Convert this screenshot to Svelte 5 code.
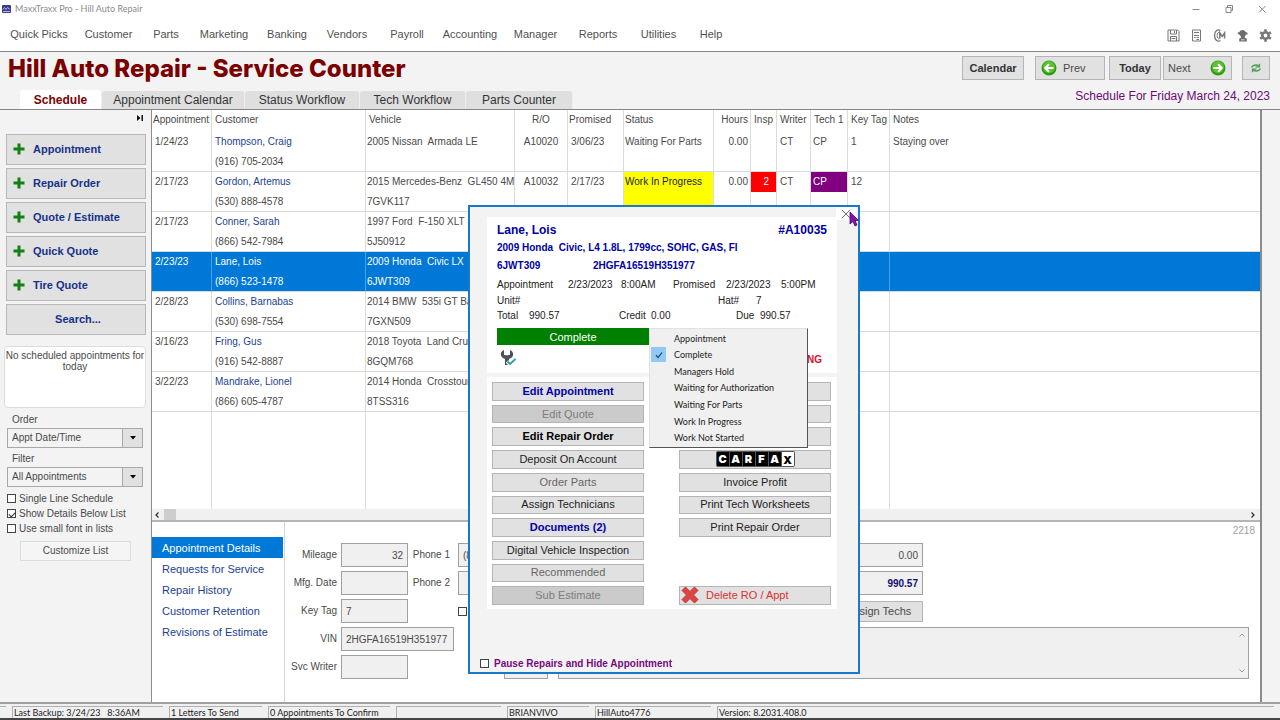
<svelte:head>
  <title>MaxxTraxx Pro - Hill Auto Repair</title>
</svelte:head>

<script lang="ts">
  type Row = {
    appt: string;
    customer: string;
    phone: string;
    vehicle: string;
    plate: string;
    ro?: string;
    promised?: string;
    status?: string;
    hours?: string;
    insp?: string;
    writer?: string;
    tech?: string;
    keyTag?: string;
    notes?: string;
    busy?: boolean;
    selected?: boolean;
  };

  type Action = {
    label: string;
    tone?: 'primary' | 'strong' | 'muted' | 'disabled' | 'danger';
    kind?: 'carfax' | 'gap';
  };

  const menus = [
    'Quick Picks', 'Customer', 'Parts', 'Marketing', 'Banking', 'Vendors',
    'Payroll', 'Accounting', 'Manager', 'Reports', 'Utilities', 'Help'
  ];

  const tabs = ['Schedule', 'Appointment Calendar', 'Status Workflow', 'Tech Workflow', 'Parts Counter'];

  const newButtons = ['Appointment', 'Repair Order', 'Quote / Estimate', 'Quick Quote', 'Tire Quote'];

  const rows: Row[] = [
    { appt: '1/24/23', customer: 'Thompson, Craig', phone: '(916) 705-2034', vehicle: '2005 Nissan  Armada LE', plate: '', ro: 'A10020', promised: '3/06/23', status: 'Waiting For Parts', hours: '0.00', writer: 'CT', tech: 'CP', keyTag: '1', notes: 'Staying over' },
    { appt: '2/17/23', customer: 'Gordon, Artemus', phone: '(530) 888-4578', vehicle: '2015 Mercedes-Benz  GL450 4Ma', plate: '7GVK117', ro: 'A10032', promised: '2/17/23', status: 'Work In Progress', hours: '0.00', insp: '2', writer: 'CT', tech: 'CP', keyTag: '12', busy: true },
    { appt: '2/17/23', customer: 'Conner, Sarah', phone: '(866) 542-7984', vehicle: '1997 Ford  F-150 XLT', plate: '5J50912' },
    { appt: '2/23/23', customer: 'Lane, Lois', phone: '(866) 523-1478', vehicle: '2009 Honda  Civic LX', plate: '6JWT309', selected: true },
    { appt: '2/28/23', customer: 'Collins, Barnabas', phone: '(530) 698-7554', vehicle: '2014 BMW  535i GT Ba', plate: '7GXN509' },
    { appt: '3/16/23', customer: 'Fring, Gus', phone: '(916) 542-8887', vehicle: '2018 Toyota  Land Cru', plate: '8GQM768' },
    { appt: '3/22/23', customer: 'Mandrake, Lionel', phone: '(866) 605-4787', vehicle: '2014 Honda  Crosstour', plate: '8TSS316' }
  ];

  const detailTabs = [
    'Appointment Details', 'Requests for Service', 'Repair History',
    'Customer Retention', 'Revisions of Estimate'
  ];

  const leftActions: Action[] = [
    { label: 'Edit Appointment', tone: 'primary' },
    { label: 'Edit Quote', tone: 'disabled' },
    { label: 'Edit Repair Order', tone: 'strong' },
    { label: 'Deposit On Account' },
    { label: 'Order Parts', tone: 'muted' },
    { label: 'Assign Technicians' },
    { label: 'Documents (2)', tone: 'primary' },
    { label: 'Digital Vehicle Inspection' },
    { label: 'Recommended', tone: 'muted' },
    { label: 'Sub Estimate', tone: 'disabled' }
  ];

  const rightActions: Action[] = [
    { label: '' },
    { label: '' },
    { label: '' },
    { label: 'CARFAX', kind: 'carfax' },
    { label: 'Invoice Profit' },
    { label: 'Print Tech Worksheets' },
    { label: 'Print Repair Order' },
    { label: '', kind: 'gap' },
    { label: '', kind: 'gap' },
    { label: 'Delete RO / Appt', tone: 'danger' }
  ];

  const statuses = [
    'Appointment', 'Complete', 'Managers Hold', 'Waiting for Authorization',
    'Waiting For Parts', 'Work In Progress', 'Work Not Started'
  ];

  let current = $state('Complete');
  let activeTab = $state('Schedule');
  let activeDetail = $state('Appointment Details');
</script>

<div class="app">
  <header class="titlebar">
    <svg class="app-icon" viewBox="0 0 9 8" aria-hidden="true">
      <rect width="9" height="8" rx="1" fill="#3d3a8c" />
      <path d="M1 4.5 2.5 2.5 4 4.5 5.5 2.5 8 4.500M1 6.500h7" stroke="#b9b6ee" stroke-width="1" fill="none" />
    </svg>
    <span>MaxxTraxx Pro - Hill Auto Repair</span>
    <div class="window-controls">
      <svg viewBox="0 0 10 10"><path d="M1.500 5.500h7" /></svg>
      <svg viewBox="0 0 10 10"><path d="M2 3.500h5v5H2zM3.500 3.500V1.500h5v5H7" /></svg>
      <svg viewBox="0 0 10 10"><path d="M2 2l6.500 6.500M8.500 2 2 8.500" /></svg>
    </div>
  </header>

  <div class="menubar">
    <nav class="menus">
      {#each menus as menu}
        <a href="#menu">{menu}</a>
      {/each}
    </nav>
    <div class="tools">
      <svg viewBox="0 0 13 13" fill="none" stroke="#777"><path d="M1 1h9.500L12 2.500V12H1zM3.500 1v4h6V1M3.500 12V7.500h6V12M7.500 2v2M4.500 9.500h4" /></svg>
      <svg viewBox="0 0 13 13" fill="none" stroke="#777"><path d="M2.500 1h8v11h-8zM4 3.500h5M4 6.500h5M4 8.500h1.500M6.500 8.500H9M6.500 10.500H9" /></svg>
      <svg viewBox="0 0 13 13" fill="none" stroke="#777"><path d="M7.500 1.500C4.500-.200 1.500 2 1.500 6.500s3 6.700 6 5" stroke-width="1.400" /><path d="M7 3.200C5.200 2.800 4.200 4.500 4.200 6.500s1 3.700 2.300 3.300" /><path d="M6.800 9.500V4l2.400 3.500L11.600 4v5.500" stroke-width="1.500" /></svg>
      <svg viewBox="0 0 13 13" fill="#6e6e6e"><path d="M3.500 3C4.200.300 9 .300 9.600 3l1.900.8v1.700H10L8.800 7.800v1l2 .9v2.900H3.200V9.700l1.800-1v-1L3.300 5.500 1.800 5V3.500z" /><path d="M5 10.800h3.500" stroke="#ddd" /></svg>
      <svg viewBox="0 0 13 13" fill="none" stroke="#777"><circle cx="6.500" cy="6.500" r="3.200" stroke-width="2.600" /><path d="M6.500.300v2M6.500 10.700v2M1.100 3.400l1.800 1M10.100 8.600l1.800 1M1.100 9.600l1.800-1M10.100 4.400l1.800-1" stroke-width="2.600" /></svg>
    </div>
  </div>

  <section class="heading">
    <div class="heading-top">
      <h1>Hill Auto Repair - Service Counter</h1>
      <div class="date-buttons">
        <button class="btn strong calendar">Calendar</button>
        <button class="btn prev">
          <svg viewBox="0 0 16 16"><circle cx="8" cy="8" r="7.500" fill="#2f9c14" /><circle cx="8" cy="7" r="6" fill="#5cc233" /><path d="M12.500 8H4.500M8 4.300 4.300 8 8 11.700" fill="none" stroke="#fff" stroke-width="2" /></svg>
          Prev
        </button>
        <button class="btn strong today">Today</button>
        <button class="btn next">
          Next
          <svg viewBox="0 0 16 16"><circle cx="8" cy="8" r="7.500" fill="#2f9c14" /><circle cx="8" cy="7" r="6" fill="#5cc233" /><path d="M3.500 8h8M8 4.300 11.700 8 8 11.700" fill="none" stroke="#fff" stroke-width="2" /></svg>
        </button>
        <button class="btn refresh" aria-label="Refresh">
          <svg viewBox="0 0 12 10" fill="none" stroke="#4f9e5a" stroke-width="1.600"><path d="M1.500 4.500C3 1.500 7 1.500 9 3M10.500 5.500C9 8.500 5 8.500 3 7" /><path d="M9.500.800v3h-4M2.500 9.200v-3h4" stroke-width="1.200" /></svg>
        </button>
      </div>
    </div>
    <div class="heading-bottom">
      <div class="tabs" role="tablist">
        {#each tabs as tab}
          <button class="tab" role="tab" class:active={tab === activeTab} aria-selected={tab === activeTab} onclick={() => (activeTab = tab)}>{tab}</button>
        {/each}
      </div>
      <p class="schedule-date">Schedule For Friday March 24, 2023</p>
    </div>
  </section>

  <main class="body">
    <aside class="sidebar">
      <svg class="collapse" viewBox="0 0 6 6"><path d="M0 0l3.500 3L0 6zM4.500 0H6v6H4.500z" fill="#111" /></svg>
      <div class="new-buttons">
        {#each newButtons as label}
          <button class="side-btn">
            <svg viewBox="0 0 12 12"><path d="M6 .500v11M.500 6h11" stroke="#138013" stroke-width="3" /></svg>
            {label}
          </button>
        {/each}
        <button class="side-btn search">Search...</button>
      </div>
      <p class="notice">No scheduled appointments for today</p>
      <div class="filters">
        <label for="order">Order</label>
        <div class="select">
          <select id="order"><option>Appt Date/Time</option></select>
          <span class="arrow"><svg viewBox="0 0 6 4"><path d="M0 0h6L3 3.500z" /></svg></span>
        </div>
        <label for="filter">Filter</label>
        <div class="select">
          <select id="filter"><option>All Appointments</option></select>
          <span class="arrow"><svg viewBox="0 0 6 4"><path d="M0 0h6L3 3.500z" /></svg></span>
        </div>
      </div>
      <div class="checks">
        <label><input type="checkbox" />Single Line Schedule</label>
        <label><input type="checkbox" checked />Show Details Below List</label>
        <label><input type="checkbox" />Use small font in lists</label>
      </div>
      <button class="customize">Customize List</button>
    </aside>

    <div class="content">
      <div class="list">
        <table>
          <colgroup>
            <col class="c-appt" /><col class="c-customer" /><col class="c-vehicle" /><col class="c-ro" />
            <col class="c-promised" /><col class="c-status" /><col class="c-hours" /><col class="c-insp" />
            <col class="c-writer" /><col class="c-tech" /><col class="c-key" /><col />
          </colgroup>
          <thead>
            <tr>
              <th class="tight">Appointment</th>
              <th>Customer</th>
              <th>Vehicle</th>
              <th class="center">R/O</th>
              <th class="tight">Promised</th>
              <th class="tight">Status</th>
              <th class="right">Hours</th>
              <th class="center">Insp</th>
              <th>Writer</th>
              <th>Tech 1</th>
              <th>Key Tag</th>
              <th>Notes</th>
            </tr>
          </thead>
          <tbody>
            {#each rows as row}
              <tr class="entry" class:selected={row.selected}>
                <td>{row.appt}</td>
                <td><a href="#customer">{row.customer}</a><div>{row.phone}</div></td>
                <td class="tight"><div>{row.vehicle}</div><div>{row.plate}</div></td>
                <td class="center">{row.ro ?? ''}</td>
                <td>{row.promised ?? ''}</td>
                <td class="tight" class:busy={row.busy}>{row.status ?? ''}</td>
                <td class="right">{row.hours ?? ''}</td>
                <td class="flush">{#if row.insp}<div class="insp">{row.insp}</div>{/if}</td>
                <td>{row.writer ?? ''}</td>
                <td class="flush"><div class="tech" class:assigned={row.busy}>{row.tech ?? ''}</div></td>
                <td>{row.keyTag ?? ''}</td>
                <td>{row.notes ?? ''}</td>
              </tr>
            {/each}
            <tr class="filler">
              {#each Array(12) as _}<td></td>{/each}
            </tr>
          </tbody>
        </table>
      </div>
      <div class="hscroll">
        <svg viewBox="0 0 6 8"><path d="M4.500 1.500 2 4l2.500 2.500" /></svg>
        <span class="thumb"></span>
        <svg class="end" viewBox="0 0 6 8"><path d="M1.500 1.500 4 4 1.500 6.500" /></svg>
      </div>

      <section class="details">
        <nav class="detail-nav">
          {#each detailTabs as tab}
            <button class:active={tab === activeDetail} onclick={() => (activeDetail = tab)}>{tab}</button>
          {/each}
        </nav>
        <div class="detail-main">
          <p class="record">2218</p>
          <div class="form">
            <label for="mileage">Mileage</label>
            <input id="mileage" class="num" value="32" readonly />
            <label for="phone1" class="phone">Phone 1</label>
            <input id="phone1" value="(866) 523-1478" readonly />
            <input class="num balance" value="0.00" aria-label="Credit" readonly />

            <label for="mfg" class="start">Mfg. Date</label>
            <input id="mfg" readonly />
            <label for="phone2" class="phone">Phone 2</label>
            <input id="phone2" readonly />
            <input class="num balance due" value="990.57" aria-label="Due" readonly />

            <label for="keytag" class="start">Key Tag</label>
            <input id="keytag" value="7" readonly />
            <input type="checkbox" class="flag" aria-label="Key Tag" />
            <button class="btn assign">Assign Techs</button>

            <label for="vin" class="start">VIN</label>
            <input id="vin" class="wide" value="2HGFA16519H351977" readonly />
            <div class="memo">
              <textarea aria-label="Notes" readonly></textarea>
              <div class="memo-scroll">
                <svg viewBox="0 0 6 4"><path d="M.500 3.500 3 1l2.500 2.500" /></svg>
                <svg viewBox="0 0 6 4"><path d="M.500.500 3 3 5.500.500" /></svg>
              </div>
            </div>

            <label for="writer" class="start">Svc Writer</label>
            <input id="writer" readonly />
            <input class="code" aria-label="Svc Writer" readonly />
          </div>
        </div>
      </section>
    </div>
  </main>

  <footer class="statusbar">
    <span></span>
    <span>Last Backup: 3/24/23 &nbsp; 8:36AM</span>
    <span>1 Letters To Send</span>
    <span>0 Appointments To Confirm</span>
    <span></span>
    <span>BRIANVIVO</span>
    <span>HillAuto4776</span>
    <span>Version: 8.2031.408.0</span>
  </footer>

  <div class="dialog" role="dialog" aria-label="Lane, Lois">
    <button class="close" aria-label="Close"><svg viewBox="0 0 12 12"><path d="M1 1l10 10M11 1 1 11" stroke="#555" fill="none" /></svg></button>
    <svg class="cursor" viewBox="0 0 10 16"><path d="M1 1v12l3-2.500 2 4.500 2-1-2-4.500h3.500z" fill="#8a0fb0" stroke="#4b0a66" stroke-width=".8" /></svg>

    <section class="card summary">
      <div class="who"><strong>Lane, Lois</strong><strong>#A10035</strong></div>
      <div class="car">2009 Honda&nbsp; Civic, L4 1.8L, 1799cc, SOHC, GAS, FI</div>
      <div class="ids"><span>6JWT309</span><span>2HGFA16519H351977</span></div>
      <div class="times">
        <span>Appointment</span><span>2/23/2023</span><span>8:00AM</span><span>Promised</span><span>2/23/2023</span><span>5:00PM</span>
      </div>
      <div class="units"><span>Unit#</span><span>Hat#</span><span>7</span></div>
      <div class="totals">
        <span>Total</span><span>990.57</span><span>Credit</span><span>0.00</span><span>Due</span><span>990.57</span>
      </div>
      <div class="state">
        <button class="state-btn">{current}</button>
        <ul class="state-menu" role="menu">
          {#each statuses as status}
            <li role="none">
              <button role="menuitemradio" aria-checked={status === current} onclick={() => (current = status)}>
                <span class="tick" class:on={status === current}>
                  {#if status === current}
                    <svg viewBox="0 0 8 8"><path d="M1 4l2 2.500L7 1.500" fill="none" stroke="#1d3b5c" stroke-width="1.200" /></svg>
                  {/if}
                </span>
                {status}
              </button>
            </li>
          {/each}
        </ul>
      </div>
      <div class="flags">
        <svg viewBox="0 0 17 17">
          <path d="M4 1C1 2 0 5 1.500 7.500 2.500 9 4 9.500 5 10v6h4v-6c1-.5 3-1 3.800-3C13.800 4.500 12.500 2 10 1v5H8.500L7 6.500 5.500 6H4z" fill="#4c5157" />
          <path d="M7 12.500l3 3L16 9.500" fill="none" stroke="#fff" stroke-width="3.500" />
          <path d="M7.500 12.500l2.500 2.500L15.500 10" fill="none" stroke="#21a0a4" stroke-width="1.800" />
        </svg>
        <strong>NG</strong>
      </div>
    </section>

    <section class="card actions">
      {#each [leftActions, rightActions] as column}
        <div class="column">
          {#each column as action}
            {#if action.kind === 'gap'}
              <span></span>
            {:else if action.kind === 'carfax'}
              <button class="action">
                <span class="carfax">{#each action.label.split('') as letter, i}<b class:last={i === 5}>{letter}</b>{/each}</span>
              </button>
            {:else}
              <button class="action {action.tone ?? ''}" disabled={action.tone === 'disabled'}>
                {#if action.tone === 'danger'}
                  <svg viewBox="0 0 18 18"><path d="M4.500 1 9 5.500 13.500 1 17 4.500 12.500 9l4.500 4.500-3.500 3.500L9 12.500 4.500 17 1 13.500 5.500 9 1 4.500z" fill="#dc4444" stroke="#b43a3a" /></svg>
                {/if}
                {action.label}
              </button>
            {/if}
          {/each}
        </div>
      {/each}
    </section>

    <label class="pause"><input type="checkbox" />Pause Repairs and Hide Appointment</label>
  </div>
</div>

<style>
  :global(body) {
    margin: 0;
  }

  .app,
  .app :global(*) {
    box-sizing: border-box;
  }

  .app {
    position: relative;
    display: flex;
    flex-direction: column;
    height: 100vh;
    min-height: 720px;
    overflow: hidden;
    background: #f3f3f3;
    color: #4a4a4a;
    font-family: "Liberation Sans", Arial, sans-serif;
    font-size: 10px;
  }

  button,
  input,
  select,
  textarea {
    margin: 0;
    padding: 0;
    border-radius: 0;
    color: inherit;
    font: inherit;
  }

  p,
  h1,
  ul {
    margin: 0;
    padding: 0;
  }

  a {
    color: inherit;
    text-decoration: none;
  }

  svg {
    display: block;
    flex-shrink: 0;
  }

  input[type='checkbox'] {
    appearance: none;
    display: grid;
    place-items: center;
    width: 9px;
    height: 9px;
    border: 1px solid #444;
    background: #fff;
  }

  input[type='checkbox']:checked::after {
    content: '';
    width: 5px;
    height: 3px;
    border: solid #333;
    border-width: 0 0 1px 1px;
    transform: rotate(-45deg);
  }

  .titlebar {
    display: flex;
    align-items: center;
    gap: 4px;
    height: 17px;
    padding: 0 13px 0 2px;
    background: #fff;
    color: #8c8c8c;
    font-family: Lato, sans-serif;
    font-size: 9px;
  }

  .app-icon {
    width: 9px;
    height: 8px;
  }

  .window-controls {
    display: flex;
    gap: 23px;
    margin-left: auto;
  }

  .window-controls svg {
    width: 10px;
    height: 10px;
    fill: none;
    stroke: #888;
  }

  .menubar {
    display: flex;
    align-items: center;
    justify-content: space-between;
    height: 35px;
    padding-right: 8px;
    border-bottom: 1px solid #858585;
    background: #fff;
  }

  .menus {
    display: grid;
    grid-template-columns: 78px 61px 54px 62px 64px 56px 64px 62px 69px 56px 65px 40px;
    color: #505050;
    font-size: 11px;
    text-align: center;
  }

  .tools {
    display: flex;
    gap: 10px;
    padding-top: 3px;
  }

  .tools svg {
    width: 13px;
    height: 13px;
  }

  .btn {
    display: flex;
    align-items: center;
    justify-content: center;
    border: 1px solid #b5b5b5;
    background: #e1e1e1;
    color: #4a4a4a;
    font-size: 11px;
  }

  .strong {
    color: #333;
    font-weight: 700;
  }

  .heading-top {
    display: flex;
    justify-content: space-between;
    height: 34px;
    padding: 4px 10px 0 8px;
  }

  h1 {
    color: #7b0000;
    font-family: Inter, sans-serif;
    font-size: 24px;
    font-weight: 800;
    line-height: 25px;
    white-space: nowrap;
  }

  .date-buttons {
    display: flex;
    height: 24px;
  }

  .calendar {
    width: 62px;
    margin-right: 11px;
  }

  .prev {
    justify-content: flex-start;
    gap: 6px;
    width: 70px;
    margin-right: 4px;
    padding-left: 5px;
  }

  .today {
    width: 52px;
    margin-right: 2px;
  }

  .next {
    justify-content: space-between;
    width: 69px;
    margin-right: 10px;
    padding: 0 5px 0 4px;
  }

  .prev svg,
  .next svg {
    width: 16px;
    height: 16px;
  }

  .refresh {
    width: 28px;
  }

  .refresh svg {
    width: 12px;
    height: 10px;
  }

  .heading-bottom {
    display: flex;
    align-items: flex-end;
    justify-content: space-between;
    height: 24px;
    padding: 0 10px 0 20px;
    border-bottom: 1px solid #858585;
  }

  .tabs {
    display: grid;
    grid-template-columns: 82px 143px 115px 106px 107px;
    align-items: end;
  }

  .tab {
    height: 18px;
    border: 0;
    border-right: 1px solid #eee;
    border-radius: 3px 3px 0 0;
    background: #dfdfdf;
    color: #333;
    font-size: 12px;
    line-height: 18px;
  }

  .tab.active {
    height: 19px;
    background: #fff;
    color: #7b0000;
    font-weight: 700;
  }

  .schedule-date {
    align-self: flex-start;
    color: #6b0d78;
    font-size: 12px;
    line-height: 21px;
  }

  .body {
    display: flex;
    flex: 1;
    min-height: 0;
    padding-right: 18px;
  }

  .sidebar {
    width: 151px;
    padding: 5px 5px 0 6px;
  }

  .collapse {
    width: 6px;
    height: 6px;
    margin: 0 3px 13px auto;
  }

  .new-buttons {
    display: grid;
    gap: 3px;
  }

  .side-btn {
    display: flex;
    align-items: center;
    gap: 8px;
    height: 31px;
    padding: 0 6px 2px;
    border: 1px solid #b8b8b8;
    background: #e1e1e1;
    color: #16318a;
    font-size: 11px;
    font-weight: 700;
  }

  .side-btn svg {
    width: 12px;
    height: 12px;
  }

  .search {
    justify-content: center;
    padding-left: 10px;
  }

  .notice {
    height: 62px;
    margin: 11px 0 0 -2px;
    padding-top: 3px;
    border: 1px solid #ddd;
    border-radius: 4px;
    background: #fff;
    line-height: 11px;
    text-align: center;
  }

  .filters {
    display: grid;
    padding: 4px 3px 0 1px;
  }

  .filters label {
    height: 16px;
    padding-left: 5px;
    line-height: 16px;
  }

  .filters .select + label {
    margin-top: 3px;
  }

  .select {
    position: relative;
    height: 20px;
  }

  select {
    appearance: none;
    width: 100%;
    height: 100%;
    padding: 0 0 2px 4px;
    border: 1px solid #a8a8a8;
    background: #f3f3f3;
  }

  .arrow {
    position: absolute;
    inset: 0 0 0 auto;
    display: grid;
    place-items: center;
    width: 21px;
    border: 1px solid #a8a8a8;
    background: #e1e1e1;
    pointer-events: none;
  }

  .arrow svg {
    width: 6px;
    height: 4px;
  }

  .checks {
    display: grid;
    padding: 4px 0 0 1px;
  }

  .checks label {
    display: flex;
    align-items: center;
    gap: 3px;
    height: 15px;
    white-space: nowrap;
  }

  .customize {
    width: 111px;
    height: 20px;
    margin: 5px 0 0 14px;
    padding-bottom: 2px;
    border: 1px solid #dcdcdc;
    background: #f5f5f5;
  }

  .content {
    display: flex;
    flex: 1;
    flex-direction: column;
    min-width: 0;
    border: solid #8c8c8c;
    border-width: 0 2px 0 1px;
    background: #fff;
  }

  .list {
    flex: 1;
    min-height: 0;
  }

  table {
    width: 100%;
    height: 100%;
    border-collapse: separate;
    border-spacing: 0;
    table-layout: fixed;
  }

  .c-appt { width: 60px; }
  .c-customer { width: 154px; }
  .c-vehicle { width: 149px; }
  .c-ro { width: 53px; }
  .c-promised { width: 56px; }
  .c-status { width: 90px; }
  .c-hours { width: 37px; }
  .c-insp { width: 26px; }
  .c-writer { width: 34px; }
  .c-tech { width: 37px; }
  .c-key { width: 42px; }

  th,
  td {
    overflow: hidden;
    padding: 0 0 0 3px;
    border-right: 1px solid #dcdcdc;
    line-height: 20px;
    text-align: left;
    vertical-align: top;
    white-space: pre;
  }

  th {
    height: 22px;
    font-weight: 400;
  }

  th:last-child,
  td:last-child {
    border-right: 0;
  }

  .entry td {
    height: 40px;
    border-bottom: 1px solid #d5dada;
  }

  td a {
    display: block;
    color: #1c3f94;
  }

  td a + div,
  td div + div {
    height: 19px;
  }

  .tight {
    padding-left: 1px;
  }

  .center {
    padding: 0;
    text-align: center;
  }

  .right {
    padding-right: 2px;
    text-align: right;
  }

  td.flush {
    padding: 0;
  }

  td.busy {
    background: #ff0;
    color: #222;
  }

  .insp {
    padding-right: 7px;
    background: #f00;
    color: #fff;
    text-align: right;
  }

  .tech {
    padding-left: 2px;
  }

  .tech.assigned {
    background: #800080;
    color: #fff;
  }

  .selected td {
    border-right-color: #4c9fe0;
    background: #0078d7;
    color: #fff;
  }

  .selected a {
    color: #fff;
  }

  .hscroll {
    display: flex;
    align-items: center;
    height: 13px;
    padding: 0 4px 0 2px;
    border-bottom: 2px solid #b4b4b4;
    background: #f0f0f0;
  }

  .hscroll svg {
    width: 6px;
    height: 8px;
    fill: none;
    stroke: #333;
    stroke-width: 1.300;
  }

  .hscroll .end {
    margin-left: auto;
  }

  .thumb {
    width: 12px;
    height: 11px;
    margin-left: 4px;
    background: #cdcdcd;
  }

  .details {
    display: flex;
    height: 180px;
  }

  .detail-nav {
    display: flex;
    flex-direction: column;
    width: 133px;
    padding: 15px 1px 0 0;
    border-right: 1px solid #d5d5d5;
  }

  .detail-nav button {
    height: 21px;
    padding-left: 10px;
    border: 0;
    background: none;
    color: #1c3f94;
    font-size: 11px;
    text-align: left;
  }

  .detail-nav .active {
    background: #0078d7;
    color: #fff;
  }

  .detail-main {
    flex: 1;
    padding: 3px 11px 0 0;
  }

  .record {
    height: 18px;
    margin-right: -6px;
    color: #a0a0a0;
    line-height: 12px;
    text-align: right;
  }

  .form {
    display: grid;
    grid-template-columns: 52px 67px 42px 96px 365px 1fr;
    grid-auto-rows: 24px;
    gap: 4px;
  }

  .form label {
    line-height: 23px;
    text-align: right;
    white-space: nowrap;
  }

  .form .phone {
    padding-right: 4px;
  }

  .start {
    grid-column: 1;
  }

  .form input:not([type='checkbox']),
  textarea {
    min-width: 0;
    width: 100%;
    padding: 0 4px;
    border: 1px solid #a0a0a0;
    background: #f0f0f0;
  }

  .form .num {
    text-align: right;
  }

  .form input.balance {
    justify-self: end;
    width: 100px;
  }

  .form .due {
    color: #10106e;
    font-weight: 700;
  }

  .flag {
    grid-column: 4;
    align-self: center;
  }

  .assign {
    grid-column: 5;
    place-self: center end;
    width: 88px;
    height: 21px;
  }

  .form input.wide {
    grid-column: 2 / 4;
  }

  .memo {
    position: relative;
    grid-row: 4 / 6;
    grid-column: 5 / 7;
  }

  textarea {
    display: block;
    height: 100%;
    resize: none;
  }

  .memo-scroll {
    position: absolute;
    inset: 6px 4px 6px auto;
    display: flex;
    flex-direction: column;
    justify-content: space-between;
  }

  .memo-scroll svg {
    width: 6px;
    height: 4px;
    fill: none;
    stroke: #999;
  }

  .form input.code {
    grid-column: 4;
    justify-self: end;
    width: 44px;
    margin-right: 6px;
  }

  .statusbar {
    display: grid;
    grid-template-columns: 6px 151px 93px 122px 105px 82px 116px 1fr;
    gap: 6px;
    height: 18px;
    padding: 2px 6px 0 0;
    border-top: 2px solid #a0a0a0;
    border-bottom: 2px solid #444;
    background: #f0f0f0;
    color: #222;
    font-family: Lato, sans-serif;
    font-size: 9px;
    line-height: 12px;
  }

  .statusbar span {
    overflow: hidden;
    padding-left: 1px;
    border: solid #b0b0b0;
    border-width: 1px 0 0 1px;
    white-space: nowrap;
  }

  .statusbar span:first-child {
    border-left: 0;
  }

  .dialog {
    position: absolute;
    top: 205px;
    left: 468px;
    width: 392px;
    padding: 10px 21px 1px 17px;
    border: 2px solid #1a78c8;
    background: #f3f3f3;
  }

  .close {
    position: absolute;
    top: 0;
    right: 2px;
    display: grid;
    place-items: center;
    width: 20px;
    height: 13px;
    border: 0;
    background: #fff;
  }

  .close svg {
    width: 10px;
    height: 10px;
  }

  .cursor {
    position: absolute;
    top: 4px;
    right: -1px;
    width: 10px;
    height: 16px;
  }

  .card {
    background: #fff;
  }

  .summary {
    height: 156px;
    padding: 4px 10px 0;
    color: #222;
  }

  .who,
  .car,
  .ids {
    color: #0000a8;
    font-weight: 700;
    line-height: 18px;
    white-space: nowrap;
  }

  .who {
    display: flex;
    justify-content: space-between;
    font-size: 12px;
  }

  .ids {
    display: grid;
    grid-template-columns: 96px 1fr;
    margin-bottom: 2px;
  }

  .times,
  .units,
  .totals {
    display: grid;
    line-height: 16px;
  }

  .times {
    grid-template-columns: 71px 53px 52px 53px 55px 1fr;
  }

  .units {
    grid-template-columns: 221px 38px 1fr;
  }

  .totals {
    grid-template-columns: 32px 90px 32px 85px 24px 1fr;
    line-height: 14px;
  }

  .state {
    position: relative;
    z-index: 1;
    margin-top: 5px;
  }

  .state-btn {
    display: block;
    width: 152px;
    height: 17px;
    border: 0;
    background: #008000;
    color: #fff;
    font-size: 11px;
  }

  .state-menu {
    position: absolute;
    top: 0;
    left: 152px;
    display: grid;
    grid-template-rows: repeat(7, 1fr);
    width: 159px;
    height: 120px;
    padding: 1px;
    border: 1px solid #e2e2e2;
    border-right-color: #555;
    border-bottom-color: #555;
    background: #f0f0f0;
    list-style: none;
  }

  .state-menu button {
    display: flex;
    align-items: center;
    gap: 8px;
    width: 100%;
    height: 100%;
    border: 0;
    background: none;
    font-family: Lato, sans-serif;
    font-size: 9px;
  }

  .tick {
    display: grid;
    place-items: center;
    width: 15px;
    height: 15px;
  }

  .tick.on {
    background: #91c9f7;
  }

  .tick svg {
    width: 8px;
    height: 8px;
  }

  .flags {
    display: flex;
    justify-content: space-between;
    padding: 4px 5px 0 3px;
    color: #d3142a;
    line-height: 22px;
  }

  .flags svg {
    width: 17px;
    height: 17px;
  }

  .actions {
    display: flex;
    justify-content: space-between;
    height: 232px;
    margin-top: 4px;
    padding: 5px 6px 4px 5px;
  }

  .column {
    display: grid;
    grid-template-rows: repeat(10, 1fr);
    gap: 4px;
    width: 152px;
  }

  .action {
    position: relative;
    display: flex;
    align-items: center;
    justify-content: center;
    min-height: 0;
    padding-bottom: 1px;
    border: 1px solid #b5b5b5;
    background: #e1e1e1;
    color: #222;
    font-size: 11px;
  }

  .action.primary {
    color: #0000a8;
    font-weight: 700;
  }

  .action.strong {
    color: #000;
    font-weight: 700;
  }

  .action.muted {
    color: #666;
  }

  .action.disabled {
    background: #cbcbcb;
    color: #7c7c7c;
  }

  .action.danger {
    justify-content: flex-start;
    gap: 7px;
    padding-left: 1px;
    color: #e03030;
  }

  .action svg {
    width: 18px;
    height: 18px;
  }

  .carfax {
    display: flex;
    gap: 1px;
    padding: 1px;
    border-radius: 2px;
    background: #555;
  }

  .carfax b {
    width: 12px;
    height: 14px;
    background: #000;
    color: #fff;
    font-family: Inter, sans-serif;
    font-size: 11px;
    font-weight: 900;
    line-height: 14px;
  }

  .carfax .last {
    background: #fff;
    color: #000;
    line-height: 17px;
  }

  .pause {
    display: flex;
    align-items: center;
    gap: 5px;
    height: 15px;
    margin: 47px 0 0 -7px;
    color: #750a80;
    font-weight: 700;
  }
</style>
